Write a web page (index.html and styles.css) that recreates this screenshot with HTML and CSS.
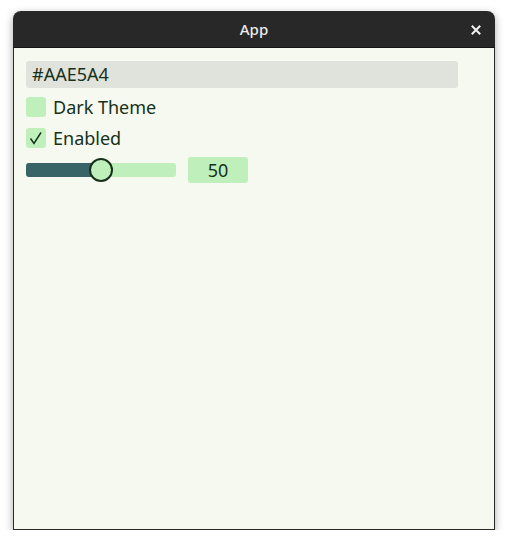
FILE: index.html
```html
<!DOCTYPE html>
<html>
<head>
<meta charset="utf-8">
<link rel="stylesheet" href="styles.css">
</head>
<body>
<div class="window">
  <div class="titlebar">
    <span class="title">App</span>
    <span class="close">
      <svg width="10" height="10" viewBox="0 0 10 10"><path d="M1.5 1.5 L8.5 8.5 M8.5 1.5 L1.5 8.5" stroke="#f2f2f2" stroke-width="2" stroke-linecap="square"/></svg>
    </span>
  </div>
  <div class="content">
    <div class="textinput">#AAE5A4</div>
    <label class="check">
      <span class="box"></span>
      <span class="label">Dark Theme</span>
    </label>
    <label class="check">
      <span class="box">
        <svg width="16" height="16" viewBox="0 0 16 16"><path d="M2.5 8.5 L6 13.5 L13 2.5" fill="none" stroke="#17301a" stroke-width="1.5"/></svg>
      </span>
      <span class="label">Enabled</span>
    </label>
    <div class="sliderrow">
      <div class="slider">
        <div class="fill"></div>
        <div class="thumb"></div>
      </div>
      <div class="value">50</div>
    </div>
  </div>
</div>
</body>
</html>
```
FILE: styles.css
```css
html, body {
  margin: 0;
  padding: 0;
  background: #ffffff;
}
body {
  padding: 11px 0 0 13px;
  font-family: "Noto Sans", "Open Sans", sans-serif;
}
.window {
  width: 482px;
  height: 519px;
  display: flex;
  flex-direction: column;
  border-radius: 8px 8px 0 0;
  box-shadow: 0 3px 8px rgba(0,0,0,0.35);
  overflow: hidden;
}
.titlebar {
  height: 37px;
  flex: none;
  background: #282828;
  border-bottom: 1px solid #141414;
  box-sizing: border-box;
  display: flex;
  align-items: center;
  justify-content: center;
  position: relative;
}
.title {
  color: #ececec;
  font-size: 15px;
  font-weight: 500;
}
.close {
  position: absolute;
  right: 14px;
  top: 14px;
  width: 10px;
  height: 10px;
  display: flex;
}
.content {
  flex: 1;
  background: #f6f9f0;
  border: 1px solid #2b2b2b;
  border-top: none;
  padding: 13px 12px 12px;
  display: flex;
  flex-direction: column;
}
.textinput {
  width: 432px;
  height: 27px;
  box-sizing: border-box;
  background: #dfe3db;
  border-radius: 3px;
  padding-left: 6px;
  font-size: 18px;
  line-height: 27px;
  color: #17301a;
  margin-bottom: 9px;
}
.check {
  display: flex;
  align-items: center;
  gap: 7px;
  height: 20px;
  margin-bottom: 11px;
  color: #17301a;
  font-size: 18px;
}
.box {
  width: 20px;
  height: 20px;
  background: #bff0bb;
  border-radius: 3px;
  display: flex;
  align-items: center;
  justify-content: center;
}
.sliderrow {
  display: flex;
  align-items: center;
  gap: 12px;
  margin-top: -2px;
}
.slider {
  width: 150px;
  height: 14px;
  background: #bff0bb;
  border-radius: 3px;
  position: relative;
}
.fill {
  width: 75px;
  height: 14px;
  background: #386468;
  border-radius: 3px 0 0 3px;
}
.thumb {
  position: absolute;
  left: 63px;
  top: -5px;
  width: 20px;
  height: 20px;
  border-radius: 50%;
  background: #bff0bb;
  border: 2px solid #17301a;
}
.value {
  width: 60px;
  height: 26px;
  background: #bff0bb;
  border-radius: 3px;
  display: flex;
  align-items: center;
  justify-content: center;
  font-size: 18px;
  color: #17301a;
}
```
